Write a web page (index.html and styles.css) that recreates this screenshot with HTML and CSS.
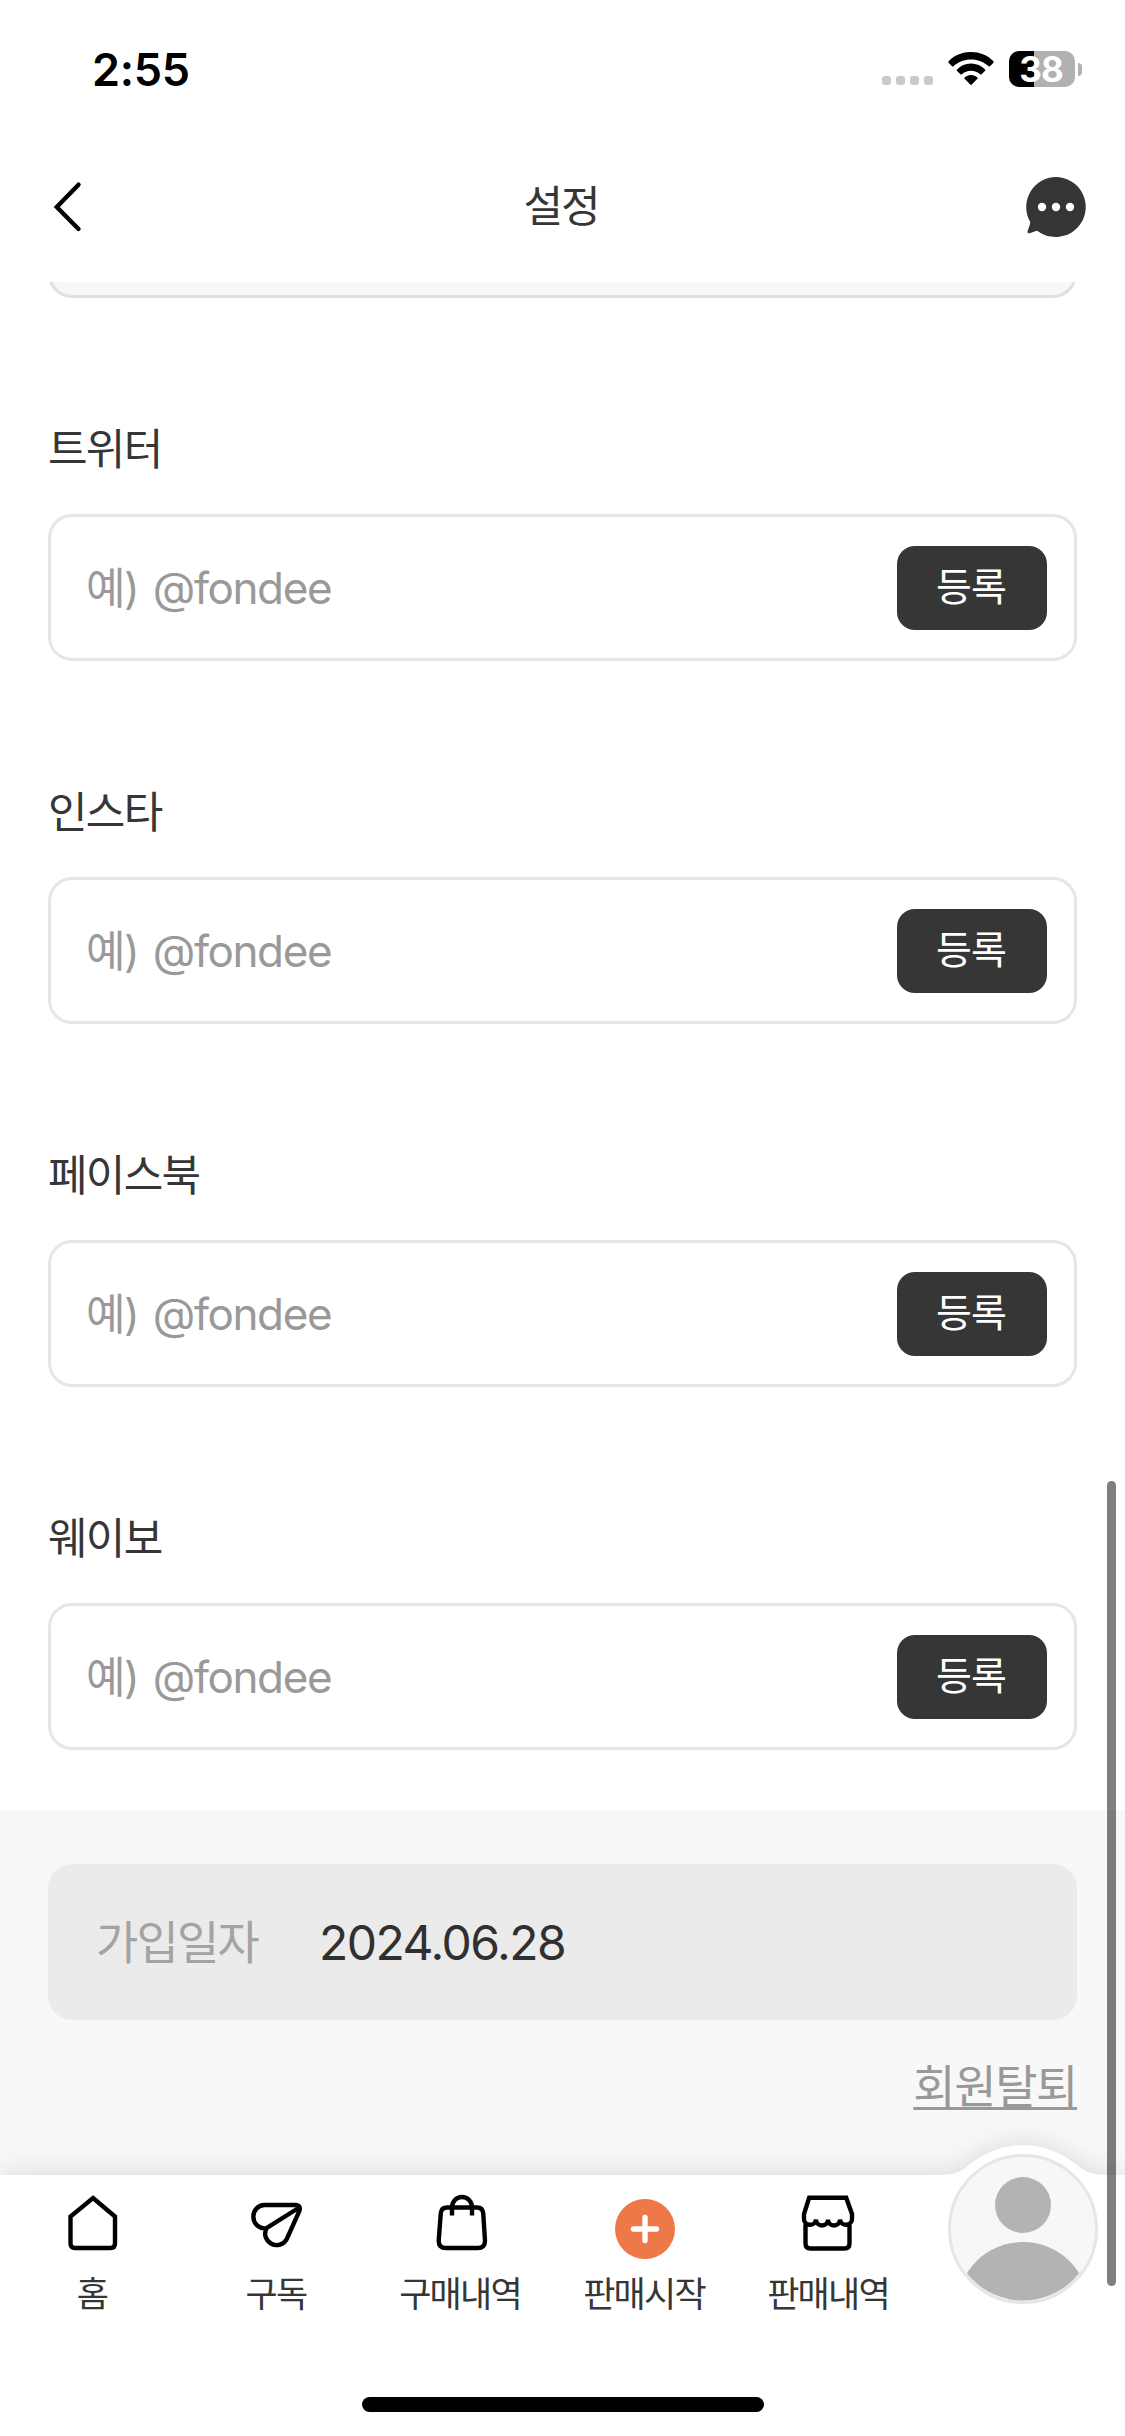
FILE: index.html
```html
<!DOCTYPE html>
<html lang="ko">
<head>
<meta charset="utf-8">
<title>설정</title>
<link rel="stylesheet" href="styles.css">
</head>
<body>
<div class="screen">
  <div class="statusbar">
    <span class="clock">2:55</span>
    <div class="indicators">
      <span class="signal"><i></i><i></i><i></i><i></i></span>
      <svg class="wifi" width="46" height="34" viewBox="0 0 46 34">
        <path d="M23 0C14 0 6 3.4 0.6 9.2Q0 10 .6 10.8L4 14.2Q4.700 14.800 5.400 14.200C10 9.800 16.200 7.400 23 7.400S36 9.800 40.600 14.200Q41.300 14.800 42 14.200L45.400 10.800Q46 10 45.400 9.200C40 3.400 32 0 23 0Z"/>
        <path d="M23 11.600C17.500 11.600 12.600 13.800 8.900 17.400Q8.300 18.100 8.900 18.800L12.400 22.200Q13.100 22.800 13.800 22.200C16.300 20 19.500 18.700 23 18.700S29.700 20 32.200 22.200Q32.900 22.800 33.600 22.200L37.100 18.800Q37.700 18.100 37.100 17.400C33.400 13.800 28.500 11.600 23 11.600Z"/>
        <path d="M23 23C20.500 23 18.300 23.900 16.600 25.400Q16 26.100 16.600 26.800L22.200 32.600Q23 33.300 23.800 32.600L29.400 26.800Q30 26.100 29.400 25.400C27.700 23.900 25.500 23 23 23Z"/>
      </svg>
      <span class="battery"><span class="level">38</span><i class="nub"></i></span>
    </div>
  </div>

  <header class="header">
    <svg class="back" width="34" height="54" viewBox="0 0 34 54"><path d="M30.500 4.700 8.800 27 30.500 49"/></svg>
    <h1>설정</h1>
    <svg class="chat" width="62" height="62" viewBox="0 0 62 62">
      <path d="M31 1a30 30 0 1 1-18 54.200Q12.200 54.600 11 55L4.500 57.200Q2 57.800 2.600 55.200L5 48Q5.400 46.800 5 45.600A30 30 0 0 1 31 1Z"/>
      <g fill="#fff"><circle cx="17" cy="31" r="4.200"/><circle cx="31" cy="31" r="4.200"/><circle cx="45" cy="31" r="4.200"/></g>
    </svg>
  </header>

  <main class="content">
    <div class="clip"><div class="previous"></div></div>
    <section class="field"><h2>트위터</h2><div class="box"><span class="hint">예) <b>@fondee</b></span><button>등록</button></div></section>
    <section class="field"><h2>인스타</h2><div class="box"><span class="hint">예) <b>@fondee</b></span><button>등록</button></div></section>
    <section class="field"><h2>페이스북</h2><div class="box"><span class="hint">예) <b>@fondee</b></span><button>등록</button></div></section>
    <section class="field"><h2>웨이보</h2><div class="box"><span class="hint">예) <b>@fondee</b></span><button>등록</button></div></section>
    <section class="account">
      <div class="joined"><span class="key">가입일자</span><span class="date">2024.06.28</span></div>
      <a class="leave">회원탈퇴</a>
    </section>
  </main>

  <nav class="tabbar">
    <svg class="surface" width="1125" height="301" viewBox="0 0 1125 301">
      <path d="M0 40H938C953 40 961 37 969 30A84 84 0 0 1 1077 30C1085 37 1093 40 1108 40H1125V301H0Z"/>
    </svg>
    <div class="tabs">
      <a class="tab"><svg width="60" height="64" viewBox="0 0 60 64"><path d="M31 8 53 26.500V53.500Q53 58 48.500 58H13Q8.500 58 8.500 53.500V26.500Z"/></svg><span>홈</span></a>
      <a class="tab"><svg width="60" height="64" viewBox="0 0 60 64"><path d="M18.500 15H49.500Q55.500 15.500 53.200 21.500L40.800 49A11.400 11.400 0 0 1 20.500 38.200A11.400 11.400 0 0 1 7.400 26.300 11.400 11.400 0 0 1 18.500 15ZM20.500 38.200 52.500 18"/></svg><span>구독</span></a>
      <a class="tab"><svg width="60" height="64" viewBox="0 0 60 64"><path stroke-linecap="butt" d="M17 17.500H47Q52.500 17.500 53.200 23L55 50.500Q55.200 58 47.700 58H16Q8.500 58 8.700 50.500L10.800 23Q11.500 17.500 17 17.500ZM22 25.500V17.500A10 10.500 0 0 1 42 17.500V25.500"/></svg><span>구매내역</span></a>
      <a class="tab"><svg width="60" height="64" viewBox="0 0 60 64"><circle cx="31" cy="39" r="30" fill="#ef7848" stroke="none"/><path d="M31 27.500V50.500M19.500 39H42.500" stroke="#fff" stroke-width="5.400"/></svg><span>판매시작</span></a>
      <a class="tab"><svg width="60" height="64" viewBox="0 0 60 64"><path d="M11.200 7.700H48.200L54 24V28A5.900 5.900 0 0 1 42 29.500 6 6 0 0 1 30 29.500 6 6 0 0 1 18 29.500 5.900 5.900 0 0 1 6 28V24ZM7.500 35V53.500Q7.500 58.500 12.500 58.500H46.500Q51.500 58.500 51.500 53.500V35"/></svg><span>판매내역</span></a>
    </div>
    <svg class="avatar" width="150" height="150" viewBox="0 0 150 150">
      <clipPath id="face"><circle cx="75" cy="75" r="71.500"/></clipPath>
      <circle cx="75" cy="75" r="73.500" fill="#f7f7f7" stroke="#e6e6e6" stroke-width="3"/>
      <g fill="#b3b3b3" clip-path="url(#face)"><circle cx="75" cy="51" r="28"/><circle cx="75" cy="154" r="66"/></g>
    </svg>
    <i class="home-indicator"></i>
  </nav>
  <i class="scrollbar"></i>
</div>
</body>
</html>
```
FILE: styles.css
```css
* { box-sizing: border-box; margin: 0; padding: 0; }

body {
  width: 1125px;
  height: 2436px;
  overflow: hidden;
  background: #fff;
  color: #363636;
  font-family: Inter, "Noto Sans CJK KR", sans-serif;
}

h1, h2, b, button { font-weight: 400; }

.screen {
  position: relative;
  display: flex;
  flex-direction: column;
  width: 1125px;
  height: 2436px;
  overflow: hidden;
}

/* status bar */
.statusbar {
  display: flex;
  align-items: center;
  justify-content: space-between;
  height: 138px;
  padding: 0 43px 0 92px;
}
.clock { color: #000; font-size: 45px; font-weight: 600; letter-spacing: -0.3px; }
.indicators { display: flex; align-items: center; }
.signal { display: flex; gap: 5px; margin: 22px 15px 0 0; }
.signal i { width: 9px; height: 9px; border-radius: 3px; background: #c9c9c9; }
.wifi { margin-right: 15px; }
.battery { display: flex; align-items: center; gap: 3px; }
.level {
  width: 66px;
  height: 36px;
  padding-right: 2px;
  border-radius: 10px;
  background: linear-gradient(90deg, #000 25px, #b1b1b1 25px);
  color: #fff;
  font-size: 35px;
  font-weight: 700;
  line-height: 36px;
  letter-spacing: -1px;
  text-align: center;
}
.nub { width: 4px; height: 13px; border-radius: 0 4px 4px 0; background: #b1b1b1; }

/* header */
.header {
  display: grid;
  grid-template-columns: 62px 1fr 62px;
  align-items: center;
  height: 144px;
  padding: 0 38px 6px 48px;
}
.back { fill: none; stroke: #000; stroke-width: 4.4; stroke-linecap: round; }
.header h1 { padding: 0 13px 3px 0; font-size: 43px; line-height: 60px; letter-spacing: -2px; text-align: center; }
.chat { fill: #353535; }

/* form */
.content { flex: 1; }
.clip { display: flex; align-items: flex-end; height: 16px; margin: 0 48px; overflow: hidden; }
.previous { flex: none; width: 100%; height: 147px; border: 3px solid #e0e0e0; border-radius: 24px; background: #f7f7f7; }
.field { height: 363px; padding: 121px 48px 0; }
.field h2 { height: 60px; font-size: 43px; line-height: 60px; letter-spacing: -1.7px; }
.box {
  display: flex;
  align-items: center;
  justify-content: space-between;
  height: 147px;
  margin-top: 35px;
  padding: 0 27px 0 35px;
  border: 3px solid #e6e6e6;
  border-radius: 24px;
}
.hint { padding-bottom: 5px; color: #999; font-size: 43px; letter-spacing: -1.5px; word-spacing: 4px; }
.hint b { font-size: 44px; letter-spacing: -1.400px; }
.box button {
  width: 150px;
  height: 84px;
  padding: 0 2px 8px 0;
  border: 0;
  border-radius: 18px;
  background: #363636;
  color: #fff;
  font: inherit;
  font-size: 39px;
  letter-spacing: -1px;
}

/* account */
.account {
  display: flex;
  flex-direction: column;
  align-items: flex-end;
  height: 626px;
  margin-top: 60px;
  padding: 54px 48px 0;
  background: #f8f8f8;
}
.joined {
  display: flex;
  align-items: center;
  width: 100%;
  height: 156px;
  padding-left: 48px;
  border-radius: 24px;
  background: #ebebeb;
}
.key { width: 223px; padding-bottom: 6px; color: #a3a3a3; font-size: 46px; letter-spacing: -1.800px; }
.date { color: #303030; font-size: 48px; letter-spacing: -1.500px; }
.leave {
  margin-top: 31px;
  color: #999;
  font-size: 46px;
  line-height: 70px;
  letter-spacing: -1.4px;
  text-decoration: underline;
  text-decoration-thickness: 3px;
  text-underline-offset: 4px;
  text-decoration-skip-ink: none;
}

/* tab bar, floating over the scrolled page */
.tabbar { position: absolute; left: 0; bottom: 0; width: 1125px; height: 301px; }
.surface { position: absolute; left: 0; top: 0; overflow: visible; fill: #fff; filter: drop-shadow(0 0 14px rgba(0, 0, 0, .13)); }
.tabs { position: relative; display: grid; grid-template-columns: repeat(5, 184px); padding-top: 55px; }
.tab { display: flex; flex-direction: column; align-items: center; }
.tab svg { overflow: visible; fill: none; stroke: #000; stroke-width: 4.400; stroke-linecap: round; }
.tab span { margin-top: 13px; font-size: 35px; line-height: 54px; letter-spacing: -1.800px; }
.avatar { position: absolute; left: 948px; top: 19px; }
.home-indicator { position: absolute; left: 362px; bottom: 24px; width: 402px; height: 15px; border-radius: 8px; background: #000; }
.scrollbar { position: absolute; left: 1107px; top: 1481px; width: 9px; height: 805px; border-radius: 5px; background: rgba(0, 0, 0, .5); }
```
